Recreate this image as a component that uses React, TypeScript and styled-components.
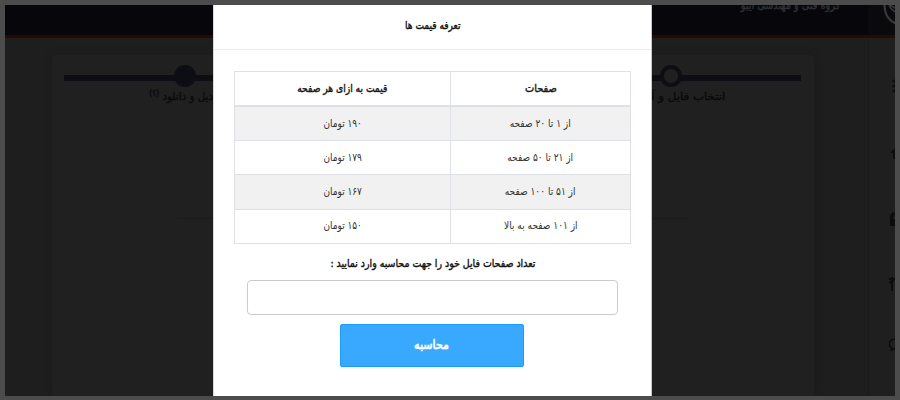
import React from 'react';
import styled, { createGlobalStyle } from 'styled-components';

const GlobalStyle = createGlobalStyle`
  * { box-sizing: border-box; }
  body { margin: 0; background: #4c4c4c; font-family: "DejaVu Sans", sans-serif; }
`;

const Frame = styled.div`
  width: 900px; height: 400px; padding: 5px 5px 4px; background: #4c4c4c; overflow: hidden;
`;
const Screen = styled.div`
  position: relative; height: 391px; overflow: hidden; background: #1e1e1e;
  display: flex; flex-direction: column;
`;
const TopBar = styled.header`
  height: 33px; flex: none; background: #07070b; border-bottom: 3px solid #260a05;
  display: flex; justify-content: flex-end; overflow: hidden;
`;
const Brand = styled.div`
  width: 100px; height: 20px; margin: -7px 28px 0 0; color: #303035;
  display: flex; justify-content: center;
`;
const LogoArea = styled.div`
  display: flex; justify-content: flex-end; width: 27px; background: #0a0a0d; flex: none; overflow: hidden;
  svg { flex: none; margin-right: -16px; }
`;
const Page = styled.div`
  flex: 1; display: flex; min-height: 0;
`;
const Main = styled.main`
  flex: 1; padding: 17px 54px 0 47px;
`;
const Card = styled.section`
  height: 100%; padding: 10px 13px 0 12px; background: #202020; border-radius: 4px 4px 0 0;
  box-shadow: 0 0 7px #1b1b1b;
`;
const Steps = styled.div`
  display: flex; justify-content: space-between; height: 47px;
  padding: 0 69px 0 60px;
  background: linear-gradient(#0d0d14, #0d0d14) 0 10px / 100% 6px no-repeat;
`;
const Step = styled.div`
  display: flex; flex-direction: column; align-items: center; gap: 2px; width: 122px;
`;
const Marker = styled.i<{ $open?: boolean }>`
  width: 22px; height: 22px; border-radius: 50%; flex: none;
  border: 4px solid #0d0d14; background: ${p => (p.$open ? '#202020' : '#0d0d14')};
`;
const Divider = styled.hr`
  width: 512px; margin: 106px auto 0; border: 0; border-top: 1px solid #1b1b1b;
`;
const Sidebar = styled.aside`
  width: 27px; flex: none; border-left: 1px solid #1a1a1a; background: #1f1f1f; overflow: hidden;
  padding-top: 41px; display: flex; flex-direction: column; color: #0b0b0b;
  svg { display: block; flex: none; }
`;
const NavIcon = styled.span<{ $gap: number }>`
  display: block; height: 16px; margin: 0 0 ${p => p.$gap}px 20px; flex: none;
`;

const Dialog = styled.div`
  position: absolute; left: 208px; top: 0; width: 439px; height: 391px;
  background: #fff; border-left: 1px solid #d9d9d9; border-right: 1px solid #c8c8c8;
`;
const DialogHead = styled.div`
  height: 45px; border-bottom: 1px solid #e6eef0; display: flex; align-items: center; justify-content: center;
  padding-bottom: 2px; color: #111;
`;
const DialogBody = styled.div`
  padding: 21px 20px 0; display: flex; flex-direction: column; align-items: center;
`;
const Table = styled.div`
  width: 397px; border: 1px solid #dee2e6; border-bottom: 0; display: flex; flex-direction: column;
`;
const Row = styled.div<{ $head?: boolean; $striped?: boolean }>`
  display: grid; grid-template-columns: 215px 1fr;
  height: ${p => (p.$head ? 35 : 34.2)}px;
  background: ${p => (p.$striped ? '#f1f1f1' : '#fff')};
  border-bottom: ${p => (p.$head ? 2 : 1)}px solid #dee2e6;
  color: ${p => (p.$head ? '#161616' : '#333')};
`;
const Cell = styled.div`
  display: flex; align-items: center; justify-content: center; min-width: 0;
  & + & { border-left: 1px solid #dee2e6; }
`;
const Label = styled.label`
  height: 20px; margin-top: 10px; display: flex; align-items: center; justify-content: center; color: #111;
`;
const Field = styled.input`
  width: 371px; height: 35px; margin-top: 6px; border: 1px solid #ccc; border-radius: 4px; background: #fff;
`;
const Button = styled.button`
  width: 184px; height: 43px; margin: 9px 1px 0 0; border: 1px solid #1c9cff; border-radius: 2px;
  background: #39a8ff; color: #fff; padding: 0;
  display: flex; align-items: center; justify-content: center;
`;

const Words = styled.span<{ $size: number; $stretch: number; $weight?: number }>`
  direction: rtl; white-space: nowrap; flex: none; line-height: 16px;
  font-family: "DejaVu Sans", sans-serif;
  font-size: ${p => p.$size}px;
  -webkit-text-stroke: ${p => p.$weight ?? 0}px currentColor;
  display: inline-block; transform: scaleX(${p => p.$stretch});
`;
const StepWords = styled(Words)`
  color: #090909;
  sup { line-height: 0; font-size: 8px; vertical-align: 4px; }
`;

const prices = [
  ['۱۹۰ تومان', 'از ۱ تا ۲۰ صفحه'],
  ['۱۷۹ تومان', 'از ۲۱ تا ۵۰ صفحه'],
  ['۱۶۷ تومان', 'از ۵۱ تا ۱۰۰ صفحه'],
  ['۱۵۰ تومان', 'از ۱۰۱ صفحه به بالا'],
];

export default function App() {
  return (
    <Frame>
      <GlobalStyle />
      <Screen>
        <TopBar>
          <Brand><Words $size={11} $stretch={0.88} $weight={0.4}>گروه فنی و مهندسی ایبو</Words></Brand>
          <LogoArea>
            <svg width="28" height="28" viewBox="0 0 28 28" fill="none" stroke="#38383c" strokeWidth="2.2">
              <path d="M1.5 0C1.5 10 7 18 16 19" />
              <path d="M6 0C8 5 11 7 16 8M7 0L16 5" strokeWidth="1.5" />
            </svg>
          </LogoArea>
        </TopBar>
        <Page>
          <Main>
            <Card>
              <Steps>
                <Step>
                  <Marker />
                  <StepWords $size={11} $stretch={0.94} $weight={0.3}>تبدیل و دانلود <sup>(؟)</sup></StepWords>
                </Step>
                <Step>
                  <Marker $open />
                  <StepWords $size={11} $stretch={1.07} $weight={0.3}>انتخاب فایل و آزمایش</StepWords>
                </Step>
              </Steps>
              <Divider />
            </Card>
          </Main>
          <Sidebar>
            <NavIcon $gap={51}>
              <svg width="16" height="16" fill="currentColor"><circle cx="5" cy="2" r="1.5" /><circle cx="5" cy="7" r="1.5" /><circle cx="5" cy="12" r="1.5" /></svg>
            </NavIcon>
            <NavIcon $gap={49}>
              <svg width="16" height="16" fill="currentColor"><path d="M1 7 8 0l7 7h-2v6H4V7z" /></svg>
            </NavIcon>
            <NavIcon $gap={49}>
              <svg width="16" height="16" fill="currentColor"><path d="M1 15V6q0-5 6-5v3q-3 0-3 4h7v7z" /></svg>
            </NavIcon>
            <NavIcon $gap={46}>
              <svg width="16" height="16" fill="none" stroke="currentColor" strokeWidth="2"><path d="M0 3h10M3 1v14M0 7l5-3M7 5v5" /></svg>
            </NavIcon>
            <NavIcon $gap={0}>
              <svg width="16" height="16" fill="none" stroke="currentColor" strokeWidth="1.5"><path d="M8 1C-1 1-1 8 3 10l-1 2q3 0 4-2h2" /></svg>
            </NavIcon>
          </Sidebar>
        </Page>
        <Dialog>
          <DialogHead><Words $size={11} $stretch={0.82} $weight={0.4}>تعرفه قیمت ها</Words></DialogHead>
          <DialogBody>
            <Table>
              <Row $head>
                <Cell><Words $size={11} $stretch={0.83} $weight={0.4}>قیمت به ازای هر صفحه</Words></Cell>
                <Cell><Words $size={11} $stretch={0.89} $weight={0.4}>صفحات</Words></Cell>
              </Row>
              {prices.map(([price, range], i) => (
                <Row key={range} $striped={i % 2 === 0}>
                  <Cell><Words $size={11} $stretch={0.81}>{price}</Words></Cell>
                  <Cell><Words $size={11} $stretch={0.82}>{range}</Words></Cell>
                </Row>
              ))}
            </Table>
            <Label><Words $size={11} $stretch={0.855} $weight={0.4}>تعداد صفحات فایل خود را جهت محاسبه وارد نمایید :</Words></Label>
            <Field aria-label="تعداد صفحات" />
            <Button><Words $size={13} $stretch={0.85} $weight={0.7}>محاسبه</Words></Button>
          </DialogBody>
        </Dialog>
      </Screen>
    </Frame>
  );
}
